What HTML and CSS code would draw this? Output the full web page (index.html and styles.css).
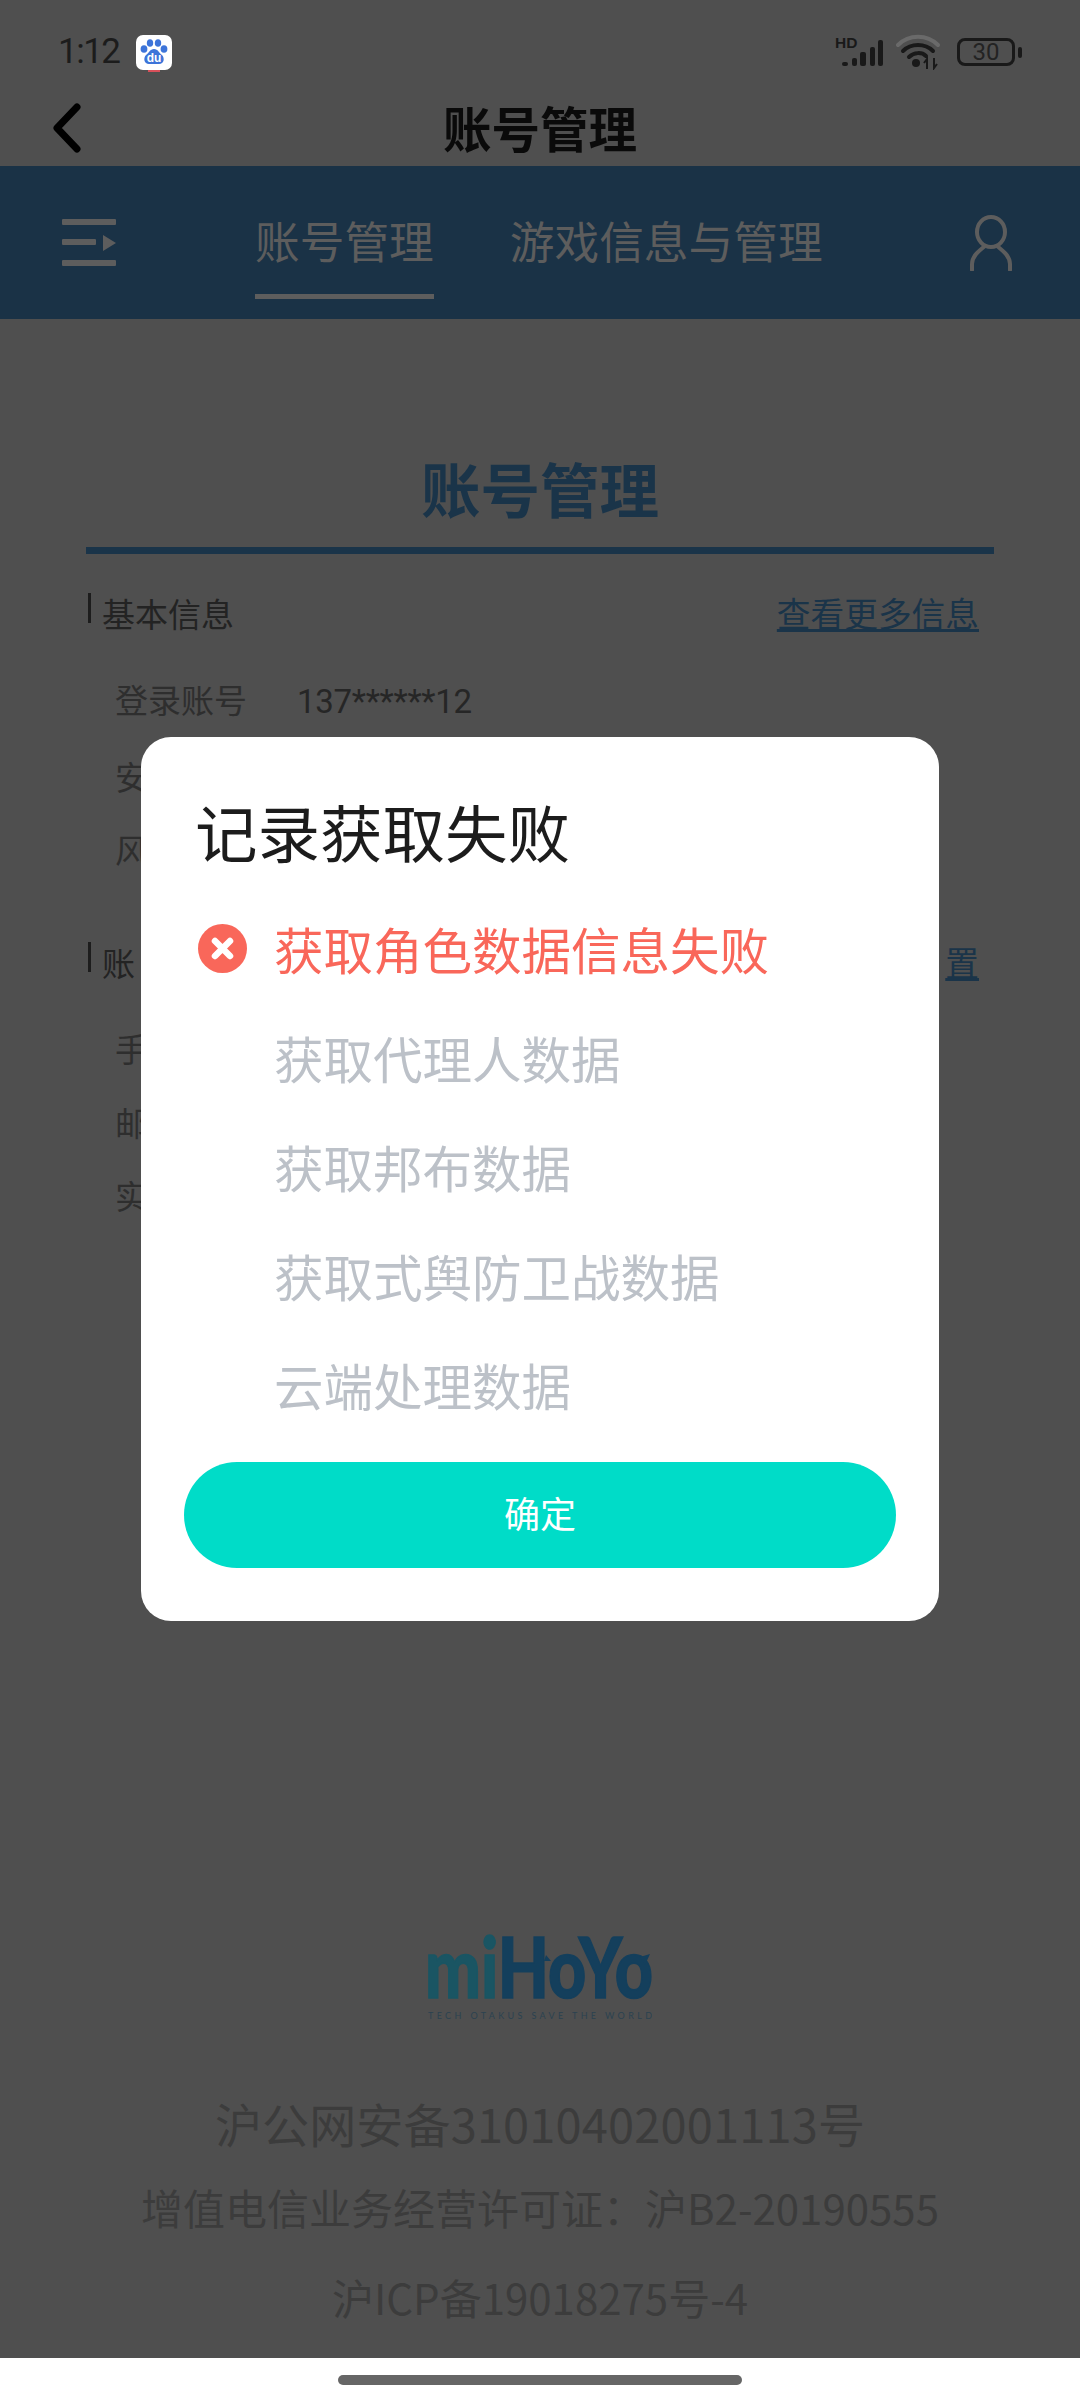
FILE: index.html
```html
<!DOCTYPE html>
<html>
	<head>
		<meta charset="utf-8">
		<title>账号管理</title>
		<link rel="stylesheet" href="styles.css">
	</head>
	<body>
		<div class="screen">
			<div class="statusbar">
				<span class="time">1:12</span>
				<svg class="baidu" width="36" height="38" viewBox="0 0 36 38">
					<rect x="12" y="30" width="12" height="7" fill="#d8505a"/>
					<rect x="0" y="0" width="36" height="35" rx="7" fill="#fff"/>
					<ellipse cx="8" cy="14" rx="3.4" ry="3.8" fill="#3d74d9"/>
					<ellipse cx="14" cy="8" rx="3.2" ry="3.8" fill="#3d74d9"/>
					<ellipse cx="22" cy="8" rx="3.2" ry="3.8" fill="#3d74d9"/>
					<ellipse cx="28" cy="14" rx="3.4" ry="3.8" fill="#3d74d9"/>
					<path d="M18 14c4 0 5 4 8 6 3 3 2 9-3 9H13c-5 0-6-6-3-9 3-2 4-6 8-6z" fill="#3d74d9"/>
					<text x="18" y="27" class="baidu-du">du</text>
				</svg>
				<div class="status-right">
					<svg width="48" height="36" viewBox="0 0 48 36">
						<text x="0" y="14" class="hd">HD</text>
						<rect x="7" y="28" width="6" height="4" rx="2" fill="#191919"/>
						<rect x="17" y="24" width="5" height="8" rx="2" fill="#191919"/>
						<rect x="25" y="18" width="6" height="14" rx="2" fill="#191919"/>
						<rect x="35" y="13" width="5" height="19" rx="2" fill="#191919"/>
						<rect x="43" y="6" width="5" height="26" rx="2" fill="#191919"/>
					</svg>
					<svg class="wifi" width="44" height="36" viewBox="0 0 44 36">
						<path d="M2 11C13 0 31 0 42 11" fill="none" stroke="#6a6a6a" stroke-width="4" stroke-linecap="round"/>
						<path d="M7 17C15 9 29 9 37 17" fill="none" stroke="#191919" stroke-width="4" stroke-linecap="round"/>
						<path d="M13 23C18 18 26 18 30 22" fill="none" stroke="#191919" stroke-width="4" stroke-linecap="round"/>
						<circle cx="20" cy="29" r="4" fill="#191919"/>
						<path d="M31 35V25l-3 4M38 24v10l3-4" fill="none" stroke="#191919" stroke-width="2"/>
					</svg>
					<div class="battery"><span class="battery-level">30</span></div>
					<span class="battery-nub"></span>
				</div>
			</div>
			<div class="titlebar">
				<svg class="back" width="32" height="50" viewBox="0 0 32 50">
					<path d="M25 4L5 25l20 21" fill="none" stroke="#000" stroke-width="7" stroke-linecap="round" stroke-linejoin="round"/>
				</svg>
				<h1>账号管理</h1>
			</div>
			<div class="header">
				<svg class="menu" width="54" height="48" viewBox="0 0 54 48">
					<rect x="0" y="0" width="54" height="6" rx="1" fill="#5d5d5d"/>
					<rect x="0" y="20" width="34" height="6" rx="1" fill="#5d5d5d"/>
					<path d="M41 16l13 8-13 8z" fill="#5d5d5d"/>
					<rect x="0" y="41" width="54" height="6" rx="1" fill="#5d5d5d"/>
				</svg>
				<div class="tabs">
					<span class="tab current">账号管理</span>
					<span class="tab">游戏信息与管理</span>
				</div>
				<svg class="user" width="42" height="56" viewBox="0 0 42 56">
					<ellipse cx="21" cy="17" rx="14" ry="15" fill="none" stroke="#5d5d5d" stroke-width="4"/>
					<path d="M2 55V49C2 41 9 36 15 31M40 55V49C40 41 33 36 27 31" fill="none" stroke="#5d5d5d" stroke-width="4" stroke-linecap="round"/>
				</svg>
			</div>
			<div class="main">
				<h2>账号管理</h2>
				<div class="section-head">
					<span class="mark"></span>
					<span class="section-title">基本信息</span>
					<a class="more" href="#">查看更多信息</a>
				</div>
				<ul class="info">
					<li><span class="label">登录账号</span><span class="value">137******12</span></li>
					<li><span class="label">安</span></li>
					<li><span class="label">风</span></li>
				</ul>
				<div class="section-head second">
					<span class="mark"></span>
					<span class="section-title">账</span>
					<a class="more" href="#">置</a>
				</div>
				<ul class="info">
					<li><span class="label">手</span></li>
					<li><span class="label">邮</span></li>
					<li><span class="label">实</span></li>
				</ul>
			</div>
			<div class="footer">
				<svg class="logo" width="224" height="66" viewBox="0 0 224 66">
					<text x="-3" y="60" class="logo-word" textLength="228" lengthAdjust="spacingAndGlyphs"><tspan class="logo-teal">mi</tspan>HoYo</text>
					<path d="M118 17l5 6-7 0zM141 17l-5 6 7 0zM222 16l-10 3 5 8z" fill="#143f5c"/>
				</svg>
				<svg class="logo-line" width="224" height="14" viewBox="0 0 224 14">
					<text x="0" y="11" class="logo-tag" textLength="224" lengthAdjust="spacing">TECH OTAKUS SAVE THE WORLD</text>
				</svg>
				<p class="police">沪公网安备31010402001113号</p>
				<p class="licence">增值电信业务经营许可证：沪B2-20190555</p>
				<p class="licence last">沪ICP备19018275号-4</p>
			</div>
			<div class="dialog-wrap">
				<div class="dialog">
					<div class="dialog-title">记录获取失败</div>
					<ul class="steps">
						<li class="fail">
							<svg width="49" height="49" viewBox="0 0 49 49">
								<circle cx="24.5" cy="24.5" r="24.5" fill="#f9675a"/>
								<path d="M17 17l15 15M32 17L17 32" stroke="#fff" stroke-width="6.5" stroke-linecap="round"/>
							</svg>
							<span>获取角色数据信息失败</span>
						</li>
						<li><i></i><span>获取代理人数据</span></li>
						<li><i></i><span>获取邦布数据</span></li>
						<li><i></i><span>获取式舆防卫战数据</span></li>
						<li><i></i><span>云端处理数据</span></li>
					</ul>
					<div class="confirm">确定</div>
				</div>
			</div>
		</div>
		<div class="navbar"><span class="pill"></span></div>
	</body>
</html>
```

FILE: styles.css
```css
*{margin: 0;padding: 0;list-style: none;box-sizing: border-box;}
body{
	width: 1080px;
	height: 2401px;
	overflow: hidden;
	background: #fff;
	font-family: "Noto Sans CJK SC", sans-serif;
	color: #232323;
}
.screen{
	height: 2358px;
	position: relative;
	display: flex;
	flex-direction: column;
	background: #4f4f4f;
}

/* status bar */
.statusbar{
	height: 90px;
	padding: 14px 58px 0;
	display: flex;
	align-items: center;
}
.time{font-family: Roboto, sans-serif;font-size: 35px;letter-spacing: -1.5px;line-height: 40px;color: #1c1c1c;width: 78px;}
.baidu{margin-top: 4px;}
.baidu-du{font-family: "Liberation Sans", sans-serif;font-size: 12px;font-weight: 700;fill: #fff;text-anchor: middle;}
.status-right{margin-left: auto;display: flex;align-items: center;}
.status-right svg{margin-right: 13px;}
.status-right .wifi{margin-right: 17px;}
.hd{font-family: "Liberation Sans", sans-serif;font-size: 15.5px;font-weight: 700;fill: #191919;}
.battery{
	width: 58px;
	height: 28px;
	border: 3px solid #191919;
	border-radius: 8px;
	text-align: center;
}
.battery-level{font-family: Roboto, sans-serif;font-size: 24px;line-height: 22px;display: block;color: #232323;}
.battery-nub{width: 4px;height: 11px;margin-left: 3px;background: #191919;border-radius: 2px;}

/* title bar */
.titlebar{height: 76px;position: relative;display: flex;align-items: center;justify-content: center;}
.back{position: absolute;left: 52px;top: 13px;}
.titlebar h1{font-size: 48.5px;line-height: 56px;font-weight: 700;color: #0a0a0a;padding-bottom: 2px;}

/* blue header */
.header{
	height: 153px;
	padding: 0 68px 0 62px;
	display: flex;
	align-items: center;
	background: #1a3246;
}
.tabs{display: flex;margin-left: 139px;gap: 76px;}
.tab{
	padding: 32px 0 32px;
	font-size: 44.7px;
	line-height: 44px;
	color: #5d5d5d;
	border-bottom: 5px solid transparent;
}
.tab.current{border-color: #5d5d5d;}
.user{margin-left: auto;}

/* account panel */
.main{padding: 138px 86px 0;}
.main h2{
	font-size: 59.5px;
	line-height: 60px;
	font-weight: 700;
	text-align: center;
	color: #1a3449;
	padding-bottom: 30px;
	border-bottom: 7px solid #1a3449;
}
.section-head{margin-top: 39px;display: flex;align-items: flex-start;font-size: 33px;line-height: 40px;}
.section-head.second{margin-top: 73px;}
.mark{width: 3px;height: 30px;margin: 0 11px 0 2px;background: #1d1d1d;}
.more{margin-left: auto;margin-right: 15px;font-size: 33.7px;color: #1a3449;text-decoration: underline;}
.info{padding: 46px 0 0 29px;display: flex;flex-direction: column;gap: 33.5px;font-size: 33px;line-height: 40px;color: #2e2e2e;}
.label{display: inline-block;width: 182px;}
.value{color: #262626;font-family: Roboto, sans-serif;letter-spacing: -.3px;}

/* footer */
.footer{
	margin-top: auto;
	padding-bottom: 40px;
	display: flex;
	flex-direction: column;
	align-items: center;
	color: #3c3c3c;
}
.logo{overflow: visible;}
.logo-line{margin-top: 4px;}
.logo-word{font-family: Lato, sans-serif;font-size: 84px;font-weight: 900;fill: #143f5c;stroke: #143f5c;stroke-width: 1.5px;}
.logo-teal{fill: #1a5563;stroke: #1a5563;}
.logo-tag{font-family: Lato, sans-serif;font-size: 9px;fill: #2b4250;}
.police{margin-top: 77px;font-size: 47px;line-height: 47px;letter-spacing: .15px;}
.licence{margin-top: 40px;font-size: 42px;line-height: 42px;}
.licence.last{margin-top: 48px;}

/* dialog */
.dialog-wrap{position: absolute;left: 0;top: 0;right: 0;bottom: 0;display: flex;justify-content: center;align-items: flex-start;padding-top: 737px;}
.dialog{width: 798px;height: 884px;padding: 62px 43px 53px;background: #fff;border-radius: 30px;display: flex;flex-direction: column;}
.dialog-title{margin-left: 11px;font-size: 62.5px;line-height: 63px;color: #1c1c1c;}
.steps{margin-top: 32px;padding-left: 14px;}
.steps li{height: 109px;display: grid;grid-template-columns: 49px 1fr;column-gap: 27px;align-items: center;font-size: 49.5px;color: #bcc1c8;}
.steps li.fail{color: #f9675a;}
.confirm{
	margin-top: auto;
	height: 106px;
	border-radius: 53px;
	background: #00dcc8;
	color: #fff;
	font-size: 36px;
	line-height: 100px;
	text-align: center;
}

.navbar{height: 43px;padding-top: 17px;display: flex;justify-content: center;}
.pill{width: 404px;height: 10px;border-radius: 5px;background: #666;}
```
